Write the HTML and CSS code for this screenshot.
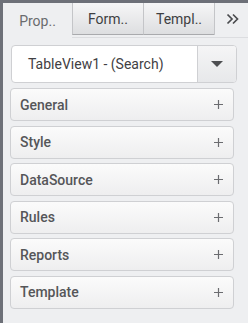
FILE: index.html
```html
<!DOCTYPE html>
<html lang="en">
<head>
  <meta charset="UTF-8" />
  <title>Properties</title>
  <link rel="stylesheet" href="styles.css">
</head>
<body>
  <div class="app">
    <div class="tabs">
      <div class="tab active">Prop..</div>
      <div class="tab">Form..</div>
      <div class="tab">Templ..</div>
      <div class="tab-more">
        <svg width="13" height="12" viewBox="0 0 13 12">
          <path d="M1.5 1.5 L6 6 L1.5 10.5 M7 1.5 L11.5 6 L7 10.5" fill="none" stroke="#4a4b4e" stroke-width="1.7" />
        </svg>
      </div>
    </div>

    <div class="content">
      <div class="select">
        <div class="select-text">TableView1 - (Search)</div>
        <div class="select-btn"><span class="caret"></span></div>
      </div>

      <div class="panels">
        <div class="panel"><span>General</span><svg class="plus" width="9" height="9" viewBox="0 0 9 9"><path d="M4.5 0 V9 M0 4.5 H9" stroke="#6b6c70" stroke-width="1.2" /></svg></div>
        <div class="panel"><span>Style</span><svg class="plus" width="9" height="9" viewBox="0 0 9 9"><path d="M4.5 0 V9 M0 4.5 H9" stroke="#6b6c70" stroke-width="1.2" /></svg></div>
        <div class="panel"><span>DataSource</span><svg class="plus" width="9" height="9" viewBox="0 0 9 9"><path d="M4.5 0 V9 M0 4.5 H9" stroke="#6b6c70" stroke-width="1.2" /></svg></div>
        <div class="panel"><span>Rules</span><svg class="plus" width="9" height="9" viewBox="0 0 9 9"><path d="M4.5 0 V9 M0 4.5 H9" stroke="#6b6c70" stroke-width="1.2" /></svg></div>
        <div class="panel"><span>Reports</span><svg class="plus" width="9" height="9" viewBox="0 0 9 9"><path d="M4.5 0 V9 M0 4.5 H9" stroke="#6b6c70" stroke-width="1.2" /></svg></div>
        <div class="panel"><span>Template</span><svg class="plus" width="9" height="9" viewBox="0 0 9 9"><path d="M4.5 0 V9 M0 4.5 H9" stroke="#6b6c70" stroke-width="1.2" /></svg></div>
      </div>
    </div>
  </div>
</body>
</html>
```
FILE: styles.css
```css
:root {
  --frame: #6d7078;
  --bg: #eeeff1;
  --border: #cfd0d3;
  --text: #555659;
}

* {
  box-sizing: border-box;
  margin: 0;
  padding: 0;
}

body {
  font-family: Roboto, "Liberation Sans", sans-serif;
  background: var(--frame);
  width: 248px;
  height: 323px;
  overflow: hidden;
  padding: 3px 0 0 3px;
}

.app {
  background: var(--bg);
  height: 320px;
}

.tabs {
  display: flex;
  height: 35px;
  border-bottom: 1px solid #dcdde0;
}

.tab {
  height: 32px;
  width: 71px;
  display: flex;
  align-items: center;
  justify-content: center;
  font-size: 14px;
  color: #3e3f42;
  background: linear-gradient(#f6f6f7, #dddee0);
  border-left: 1px solid #c4c5c8;
  border-bottom: 1px solid #a9aaad;
}

.tab.active {
  width: 69px;
  background: var(--bg);
  color: #6a6b6e;
  border: none;
  height: 35px;
}

.tab-more {
  flex: 1;
  height: 32px;
  display: flex;
  align-items: center;
  justify-content: center;
  border-left: 1px solid #c4c5c8;
  padding-left: 2px;
}

.content {
  padding: 7px 11px 0 7px;
}

.select {
  display: flex;
  height: 38px;
  margin-left: 1px;
  background: #fff;
  border: 1px solid var(--border);
  border-radius: 4px;
  overflow: hidden;
}

.select-text {
  flex: 1;
  display: flex;
  align-items: center;
  padding-left: 16px;
  font-size: 14px;
  color: #3f4043;
}

.select-btn {
  width: 39px;
  display: flex;
  align-items: center;
  justify-content: center;
  background: linear-gradient(#f5f5f6, #e7e8ea);
  border-left: 1px solid var(--border);
}

.caret {
  width: 0;
  height: 0;
  border-left: 6px solid transparent;
  border-right: 6px solid transparent;
  border-top: 6px solid #4e4f52;
}

.panels {
  display: flex;
  flex-direction: column;
  gap: 4.6px;
  margin-top: 5px;
  margin-right: 3px;
}

.panel {
  height: 33px;
  display: flex;
  align-items: center;
  justify-content: space-between;
  padding: 0 10px 0 9px;
  background: linear-gradient(#fbfbfb, #eeeeef);
  border: 1px solid var(--border);
  border-radius: 4px;
  font-size: 14px;
  font-weight: 500;
  color: var(--text);
}
```
